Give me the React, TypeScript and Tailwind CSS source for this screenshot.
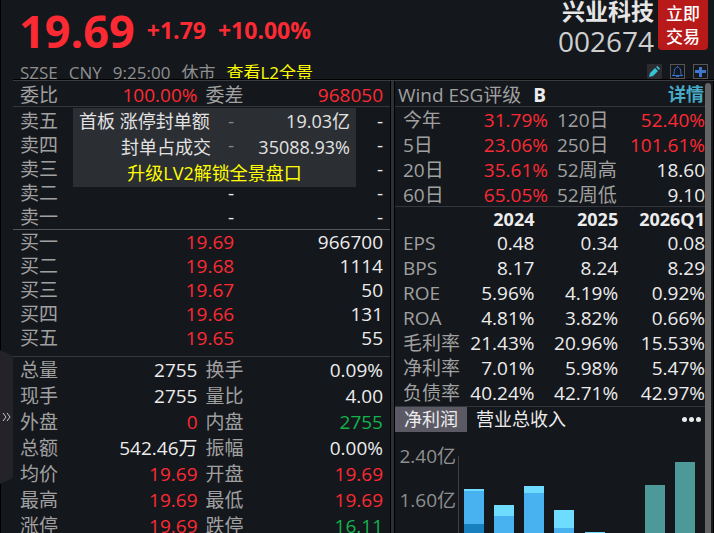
const RED = 'text-[#fc2a33]';
const GREEN = 'text-[#12b34c]';
const WHITE = 'text-[#ececec]';

const sellLevels = ['卖五', '卖四', '卖三', '卖二', '卖一'];

const buyLevels = [
  ['买一', '19.69', '966700'],
  ['买二', '19.68', '1114'],
  ['买三', '19.67', '50'],
  ['买四', '19.66', '131'],
  ['买五', '19.65', '55'],
];

const stats = [
  ['总量', '2755', WHITE, '换手', '0.09%', WHITE],
  ['现手', '2755', WHITE, '量比', '4.00', WHITE],
  ['外盘', '0', RED, '内盘', '2755', GREEN],
  ['总额', '542.46万', WHITE, '振幅', '0.00%', WHITE],
  ['均价', '19.69', RED, '开盘', '19.69', RED],
  ['最高', '19.69', RED, '最低', '19.69', RED],
  ['涨停', '19.69', RED, '跌停', '16.11', GREEN],
];

const returns = [
  ['今年', '31.79%', '120日', '52.40%', RED],
  ['5日', '23.06%', '250日', '101.61%', RED],
  ['20日', '35.61%', '52周高', '18.60', WHITE],
  ['60日', '65.05%', '52周低', '9.10', WHITE],
];

const financials = [
  ['EPS', '0.48', '0.34', '0.08'],
  ['BPS', '8.17', '8.24', '8.29'],
  ['ROE', '5.96%', '4.19%', '0.92%'],
  ['ROA', '4.81%', '3.82%', '0.66%'],
  ['毛利率', '21.43%', '20.96%', '15.53%'],
  ['净利率', '7.01%', '5.98%', '5.47%'],
  ['负债率', '40.24%', '42.71%', '42.97%'],
];

// Each segment is painted from its top down to the base of the chart.
const bars = [
  { x: 69, segments: [[57, '#6edcff'], [59, '#47b2ef'], [92, '#1880bf']] },
  { x: 99, segments: [[73, '#6edcff'], [84, '#47b2ef']] },
  { x: 129, segments: [[54, '#6edcff'], [61, '#47b2ef']] },
  { x: 159, segments: [[78, '#6edcff'], [96, '#47b2ef']] },
  { x: 190, segments: [[100, '#6edcff']] },
  { x: 250, segments: [[53, '#4d9999']] },
  { x: 280, segments: [[30, '#4d9999']] },
] as { x: number; segments: [number, string][] }[];

function Header() {
  return (
    <header className="flex h-[79px] shrink-0 justify-between pl-1.5 pr-1.5">
      <div>
        <div className="flex h-[61px] items-center gap-3 font-bold text-[#fc2a33]">
          <span className="text-[45px] leading-none">19.69</span>
          <span className="text-[23px]">+1.79</span>
          <span className="text-[23px]">+10.00%</span>
        </div>
        <div className="mt-[3px] flex gap-[11px] pl-px text-[17px] leading-[18px] text-[#8f8f8f]">
          <span>SZSE</span>
          <span>CNY</span>
          <span>9:25:00</span>
          <span>休市</span>
          <a href="#l2" className="text-[#ffff00]">查看L2全景</a>
        </div>
      </div>
      <div className="flex flex-col items-end justify-between">
        <div className="flex gap-1">
          <div className="text-right">
            <h1 className="text-[23px] font-bold leading-[23px] text-[#e6e6e6]">兴业科技</h1>
            <div className="text-[28px] leading-9 text-[#cfcfcf]">002674</div>
          </div>
          <button className="h-[50px] w-[50px] rounded-b-sm bg-[#b81919] px-2 text-[17px] font-medium leading-[23px] text-white">
            立即交易
          </button>
        </div>
        <div className="flex gap-2">
          <button aria-label="编辑" className="flex size-[15px] items-center justify-center rounded-[1px] bg-[#2b2b31]">
            <svg className="size-[15px]" viewBox="0 0 15 15" fill="#35c3d6">
              <path d="M2 13 3 9 8 4 11 7 6 12ZM9 3 10.500 2 13 4.500 12 6Z" />
            </svg>
          </button>
          <button aria-label="提醒" className="flex size-[15px] items-center justify-center border border-[#555]">
            <svg className="size-[13px]" viewBox="0 0 13 13" fill="none" stroke="#3470cc">
              <path d="M1 10.500H12M2.500 10C3.500 9 3 7 3.500 5 4 3 5 2.500 6.500 2 8 2.500 9 3 9.500 5 10 7 9.500 9 10.500 10M5 11.500H8M6.500 1V2" />
            </svg>
          </button>
          <button aria-label="添加" className="flex size-[15px] items-center justify-center border border-[#555]">
            <svg className="size-[13px]" viewBox="0 0 13 13" fill="#3c78d0">
              <path d="M5 2H8V5H12V8H8V12H5V8H1V5H5Z" />
            </svg>
          </button>
        </div>
      </div>
    </header>
  );
}

function SealOrderPopup() {
  return (
    <div className="absolute left-[60px] right-[34px] top-px h-[79px] bg-[#3a3e42]/60 px-1.5 text-[18px] leading-[26px] text-[#e2e2e2]">
      <div className="flex justify-between">
        <span>首板 涨停封单额</span>
        <span>19.03亿</span>
      </div>
      <div className="flex justify-between pl-[42px]">
        <span>封单占成交</span>
        <span>35088.93%</span>
      </div>
      <a href="#lv2" className="block text-center text-[#ffff00]">升级LV2解锁全景盘口</a>
    </div>
  );
}

function OrderBook() {
  return (
    <section className="min-w-0 text-[19px]">
      <dl className="grid h-[26px] grid-cols-2 gap-x-2 border-b border-[#34363b] pl-[7px] pr-[7px] leading-7">
        <div className="flex justify-between">
          <dt>委比</dt>
          <dd className={RED}>100.00%</dd>
        </div>
        <div className="flex justify-between">
          <dt>委差</dt>
          <dd className={RED}>968050</dd>
        </div>
      </dl>
      <div className="relative border-b border-[#55575b] pl-[7px] pr-[7px] pt-0.5">
        <table className="w-full table-fixed leading-6">
          <tbody>
            {sellLevels.map((level) => (
              <tr key={level} className="h-6">
                <th className="w-1/5 text-left font-normal">{level}</th>
                <td className="w-[39%] text-right text-[#ececec]">-</td>
                <td className="text-right text-[#ececec]">-</td>
              </tr>
            ))}
          </tbody>
        </table>
        <SealOrderPopup />
      </div>
      <div className="border-b border-[#38383d] pb-1.5 pl-[7px] pr-[7px]">
        <table className="w-full table-fixed leading-6">
          <tbody>
            {buyLevels.map(([level, price, volume]) => (
              <tr key={level} className="h-6">
                <th className="w-1/5 text-left font-normal">{level}</th>
                <td className="w-[39%] text-right text-[#fc2a33]">{price}</td>
                <td className="text-right text-[#ececec]">{volume}</td>
              </tr>
            ))}
          </tbody>
        </table>
      </div>
      <dl className="grid grid-cols-2 gap-x-2 pl-[7px] pr-[7px] leading-[26px]">
        {stats.map(([a, av, ac, b, bv, bc]) => (
          <div key={a} className="contents">
            <div className="flex h-[26px] justify-between">
              <dt>{a}</dt>
              <dd className={ac}>{av}</dd>
            </div>
            <div className="flex h-[26px] justify-between">
              <dt>{b}</dt>
              <dd className={bc}>{bv}</dd>
            </div>
          </div>
        ))}
      </dl>
    </section>
  );
}

function ProfitChart() {
  return (
    <svg className="block h-[101px] w-full" viewBox="0 0 310 101" preserveAspectRatio="xMinYMin slice" role="img" aria-label="净利润">
      <g className="fill-[#8f8f8f] text-[19px]" textAnchor="end">
        <text x="61" y="31">2.40亿</text>
        <text x="61" y="75">1.60亿</text>
      </g>
      <rect x="63" y="24" width="1" height="77" fill="#3c3e42" />
      {bars.map(({ x, segments }) =>
        segments.map(([top, fill]) => (
          <rect key={`${x}-${top}`} x={x} y={top} width="20" height={101 - top} fill={fill} />
        ))
      )}
    </svg>
  );
}

function Fundamentals() {
  return (
    <section className="flex min-w-0">
      <div className="w-[5px] border-x border-black bg-[#2f3034]" />
      <div className="min-w-0 flex-1 text-[19px]">
        <div className="flex h-[26px] border-b border-[#34363b] pl-[3px] pr-px leading-7">
          <h2>Wind ESG评级</h2>
          <span className="ml-3 font-bold text-[#ececec]">B</span>
          <a href="#esg" className="ml-auto text-[18px] font-bold leading-[26px] text-[#48a9c5]">详情</a>
        </div>
        <div className="h-[100px] border-b border-[#34363b]">
          <table className="w-full table-fixed leading-[26px]">
            <tbody>
              {returns.map(([a, av, b, bv, color]) => (
                <tr key={a} className="h-[25px]">
                  <th className="w-[20%] pl-2 text-left font-normal">
                    <div className="h-[25px]">{a}</div>
                  </th>
                  <td className="w-[30%] pr-0.5 text-right text-[#fc2a33]">
                    <div className="h-[25px]">{av}</div>
                  </td>
                  <th className="w-[25%] whitespace-nowrap pl-[7px] text-left font-normal">
                    <div className="h-[25px]">{b}</div>
                  </th>
                  <td className={`w-[25%] whitespace-nowrap ${color}`}>
                    <div className="flex h-[25px] justify-end">{bv}</div>
                  </td>
                </tr>
              ))}
            </tbody>
          </table>
        </div>
        <div className="border-b border-[#34363b]">
          <table className="w-full table-fixed leading-[25px] text-[#ececec]">
            <thead>
              <tr className="h-6 text-[18px] leading-6">
                <td className="w-[22%]" />
                <th className="w-[23%] text-right">2024</th>
                <th className="w-[27%] text-right">2025</th>
                <th className="w-[28%] text-right">2026Q1</th>
              </tr>
            </thead>
            <tbody>
              {financials.map(([name, ...values]) => (
                <tr key={name} className="h-[25px]">
                  <th className="whitespace-nowrap pl-2 text-left font-normal text-[#a0a0a0]">{name}</th>
                  {values.map((value) => (
                    <td key={value} className="text-right">{value}</td>
                  ))}
                </tr>
              ))}
            </tbody>
          </table>
        </div>
        <div className="flex h-[25px] items-center text-[18px] leading-[25px] text-[#ececec]">
          <button className="h-full bg-[#5a5964] px-[9px]">净利润</button>
          <button className="px-[9px]">营业总收入</button>
          <button aria-label="更多" className="ml-auto mr-1 flex gap-0.5">
            <i className="size-[5px] rounded-full bg-[#ececec]" />
            <i className="size-[5px] rounded-full bg-[#ececec]" />
            <i className="size-[5px] rounded-full bg-[#ececec]" />
          </button>
        </div>
        <ProfitChart />
      </div>
      <div className="mr-0.5 mt-0.5 w-1.5 rounded-t-full bg-[#646464]" />
    </section>
  );
}

export default function App() {
  return (
    <div className="flex h-screen overflow-hidden bg-[#14171c] font-['Open_Sans','Noto_Sans_CJK_SC',sans-serif] text-[#a0a0a0]">
      <aside className="flex w-[13px] shrink-0 items-start border-l border-black pt-[350px]">
        <button aria-label="展开" className="-ml-px">
          <svg className="block h-[134px] w-[13px]" viewBox="0 0 13 134">
            <path d="M0 0 13 6V128L0 134Z" fill="#242329" />
            <path d="m3 63 3 4-3 4m4-8 3 4-3 4" fill="none" stroke="#c8c8c8" />
          </svg>
        </button>
      </aside>
      <main className="flex min-w-0 flex-1 flex-col">
        <Header />
        <div className="h-0.5 shrink-0 border-t border-black bg-[#3a3b3f]" />
        <div className="grid min-h-0 flex-1 grid-cols-[377fr_323fr] border-r border-black">
          <OrderBook />
          <Fundamentals />
        </div>
      </main>
    </div>
  );
}
